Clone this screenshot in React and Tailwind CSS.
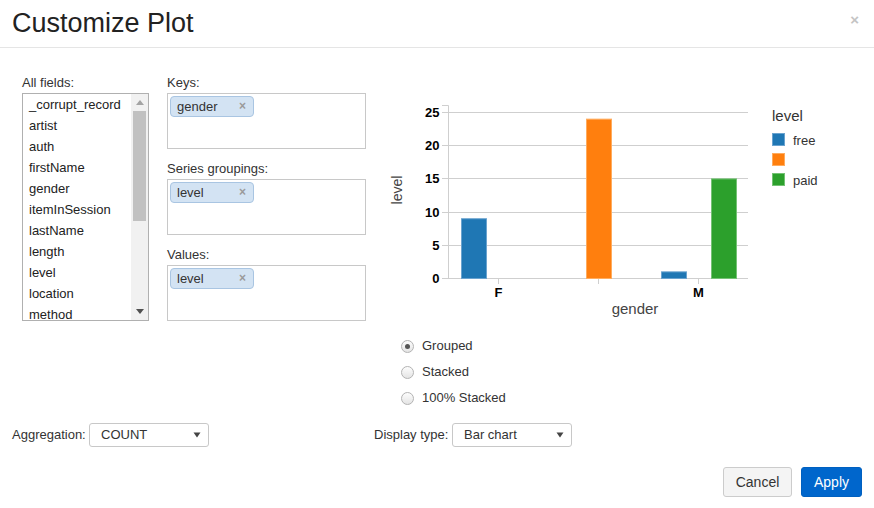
import React from "react";

const fields = [
  "_corrupt_record",
  "artist",
  "auth",
  "firstName",
  "gender",
  "itemInSession",
  "lastName",
  "length",
  "level",
  "location",
  "method",
];

function Tag({ label }) {
  return (
    <div className="flex w-[84px] h-[21px] items-center justify-between rounded-[4px] border border-[#a9c5e2] bg-[#d3e3f3] pl-[6px] pr-[7px] text-[13px] leading-[19px] text-[#333]">
      <span>{label}</span>
      <span className="text-[12px] font-bold text-[#9a9a9a]">×</span>
    </div>
  );
}

function Caret() {
  return (
    <svg width="8" height="6" viewBox="0 0 8 6">
      <path d="M0.5 0.5 H7.5 L4 5.5 Z" fill="#444" />
    </svg>
  );
}

function Select({ value }) {
  return (
    <div className="flex h-[24px] w-[120px] items-center justify-between rounded-[3px] border border-[#c8c8c8] bg-white pl-[11px] pr-[7px] text-[13px] text-[#333]">
      <span>{value}</span>
      <Caret />
    </div>
  );
}

function Chart() {
  const y = (v) => Math.round(183 - v * 6.64);
  const ticks = [0, 5, 10, 15, 20, 25];
  const bars = [
    { x: 81, v: 9, fill: "#1f77b4", stroke: "#6aa3cf" },
    { x: 206, v: 24, fill: "#ff7f0e", stroke: "#ffac5e" },
    { x: 281, v: 1, fill: "#1f77b4", stroke: "#6aa3cf" },
    { x: 331, v: 15, fill: "#2ca02c", stroke: "#74c274" },
  ];
  const legend = [
    { label: "free", fill: "#1f77b4", stroke: "#6aa3cf" },
    { label: "", fill: "#ff7f0e", stroke: "#ffac5e" },
    { label: "paid", fill: "#2ca02c", stroke: "#74c274" },
  ];
  return (
    <svg width="480" height="238" className="block" style={{ fontFamily: '"Liberation Sans", Arial, sans-serif' }}>
      {ticks.map((v) => (
        <g key={v}>
          <line x1="62" x2="368" y1={y(v) + 0.5} y2={y(v) + 0.5} stroke="#cfcfcf" />
          <text x="59.5" y={y(v) + 5} textAnchor="end" fontSize="13" fontWeight="bold" fill="#000">
            {v}
          </text>
        </g>
      ))}
      <path d="M62 10.5 H68.5 V183.5" fill="none" stroke="#cfcfcf" />
      {[118, 218, 318].map((tx) => (
        <line key={tx} x1={tx + 0.5} x2={tx + 0.5} y1="183" y2="189" stroke="#cfcfcf" />
      ))}
      {bars.map((b, i) => {
        const top = 183 - b.v * 6.64;
        return (
          <rect
            key={i}
            x={b.x + 0.5}
            y={top + 0.5}
            width="25"
            height={183 - top}
            fill={b.fill}
            stroke={b.stroke}
          />
        );
      })}
      <text x="118.5" y="202" textAnchor="middle" fontSize="13" fontWeight="bold" fill="#000">
        F
      </text>
      <text x="318.5" y="202" textAnchor="middle" fontSize="13" fontWeight="bold" fill="#000">
        M
      </text>
      <text x="255" y="219" textAnchor="middle" fontSize="15" fill="#444">
        gender
      </text>
      <text transform="translate(22,95) rotate(-90)" textAnchor="middle" fontSize="14" fill="#444">
        level
      </text>
      <text x="392" y="26" fontSize="15" fill="#333">
        level
      </text>
      {legend.map((l, i) => (
        <g key={i}>
          <rect x="392.5" y={38.5 + i * 20} width="12" height="12" fill={l.fill} stroke={l.stroke} />
          <text x="413" y={49.5 + i * 20} fontSize="13" fill="#333">
            {l.label}
          </text>
        </g>
      ))}
    </svg>
  );
}

function Radio({ label, checked }) {
  return (
    <div className="flex h-[26px] items-center gap-[8px] pl-[21px] text-[13px] text-[#333]">
      <span className="flex h-[13px] w-[13px] items-center justify-center rounded-full border border-[#b3b3b3] bg-gradient-to-b from-[#fdfdfd] to-[#e4e4e4]">
        {checked && <span className="h-[5px] w-[5px] rounded-full bg-[#555]" />}
      </span>
      <span>{label}</span>
    </div>
  );
}

export default function App() {
  return (
    <div className="h-[508px] w-[874px] overflow-hidden bg-white font-['Liberation_Sans',Arial,sans-serif] text-[#333]">
      <div className="flex h-[48px] justify-between border-b border-[#e5e5e5] pl-[12px] pr-[15px]">
        <h1 className="pt-[8px] text-[27px] leading-[30px] text-[#222]">Customize Plot</h1>
        <span className="pt-[10px] text-[15px] font-bold leading-[20px] text-[#c4c4c4]">×</span>
      </div>

      <div className="px-[12px] pt-[27px]">
        <div className="flex pl-[10px]">
          <div className="w-[127px]">
            <div className="mb-[3px] text-[13px] leading-[15px]">All fields:</div>
            <div className="flex h-[228px] overflow-hidden border border-[#b0b0b0]">
              <div className="flex-1 overflow-hidden">
                {fields.map((f) => (
                  <div key={f} className="h-[21px] pl-[6px] text-[13px] leading-[21px] text-[#222]">
                    {f}
                  </div>
                ))}
              </div>
              <div className="flex w-[17px] flex-col bg-[#f1f1f1]">
                <div className="flex h-[17px] items-center justify-center">
                  <svg width="8" height="5" viewBox="0 0 8 5">
                    <path d="M0 5 H8 L4 0 Z" fill="#a3a3a3" />
                  </svg>
                </div>
                <div className="mx-[2px] h-[110px] bg-[#c1c1c1]" />
                <div className="flex-1" />
                <div className="flex h-[17px] items-center justify-center">
                  <svg width="8" height="5" viewBox="0 0 8 5">
                    <path d="M0 0 H8 L4 5 Z" fill="#505050" />
                  </svg>
                </div>
              </div>
            </div>
          </div>

          <div className="ml-[18px] w-[199px]">
            <div className="mb-[3px] text-[13px] leading-[15px]">Keys:</div>
            <div className="h-[56px] border border-[#c8c8c8] p-[2px]">
              <Tag label="gender" />
            </div>
            <div className="mb-[3px] mt-[12px] text-[13px] leading-[15px]">Series groupings:</div>
            <div className="h-[56px] border border-[#c8c8c8] p-[2px]">
              <Tag label="level" />
            </div>
            <div className="mb-[3px] mt-[12px] text-[13px] leading-[15px]">Values:</div>
            <div className="h-[56px] border border-[#c8c8c8] p-[2px]">
              <Tag label="level" />
            </div>
          </div>

          <div className="ml-[14px] flex flex-col">
            <div className="mt-[20px]">
              <Chart />
            </div>
            <Radio label="Grouped" checked />
            <Radio label="Stacked" />
            <Radio label="100% Stacked" />
          </div>
        </div>

        <div className="mt-[12px] flex h-[24px] items-center">
          <div className="w-[77px] text-[13px]">Aggregation:</div>
          <Select value="COUNT" />
          <div className="ml-[165px] w-[78px] text-[13px]">Display type:</div>
          <Select value="Bar chart" />
        </div>

        <div className="mt-[20px] flex justify-end gap-[9px]">
          <button className="h-[30px] w-[69px] rounded-[3px] border border-[#cccccc] bg-[#f4f4f4] text-[14px] text-[#333]">
            Cancel
          </button>
          <button className="h-[30px] w-[61px] rounded-[3px] border border-[#0060c0] bg-[#0066cc] text-[14px] text-white">
            Apply
          </button>
        </div>
      </div>
    </div>
  );
}
